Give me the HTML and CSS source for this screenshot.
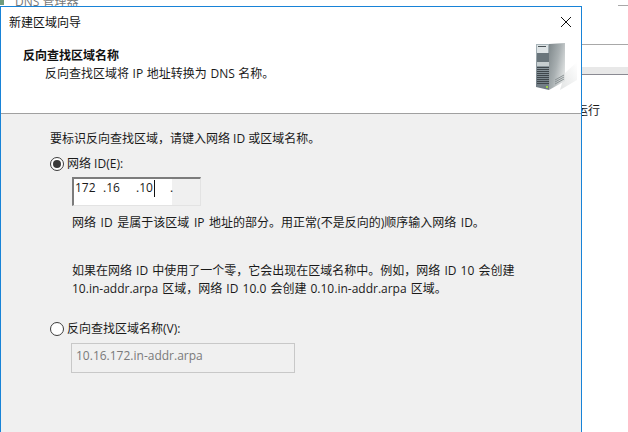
FILE: index.html
```html
<!DOCTYPE html>
<html lang="zh">
<head>
<meta charset="utf-8">
<title>新建区域向导</title>
<link rel="stylesheet" href="styles.css">
</head>
<body>
<div class="backdrop">
  <div class="bg-icon"></div>
  <div class="bg-title">DNS 管理器</div>
  <div class="bg-line bg-line-top"></div>
  <div class="bg-line bg-line-mid"></div>
  <div class="bg-band"></div>
  <div class="bg-text">运行</div>
</div>
<div class="dialog">
  <div class="titlebar">
    <span>新建区域向导</span>
    <svg class="close" width="12" height="12" viewBox="0 0 12 12"><path d="M1 1L11 11M11 1L1 11" stroke="#111" stroke-width="1" fill="none"/></svg>
  </div>
  <header class="head">
    <div class="head-text">
      <h1>反向查找区域名称</h1>
      <p>反向查找区域将 IP 地址转换为 DNS 名称。</p>
    </div>
    <svg class="server" width="41" height="48" viewBox="0 0 41 48">
      <defs>
        <linearGradient id="side" x1="0" y1="0" x2="1" y2="0.6"><stop offset="0" stop-color="#7f888b"/><stop offset=".55" stop-color="#a9b0b2"/><stop offset="1" stop-color="#dfe2e2"/></linearGradient>
        <linearGradient id="shadow" x1="0" y1="1" x2="1" y2="0"><stop offset="0" stop-color="#e2e4e4"/><stop offset="1" stop-color="#ffffff"/></linearGradient>
        <linearGradient id="front" x1="0" y1="0" x2="0" y2="1"><stop offset="0" stop-color="#a9b5ba"/><stop offset="1" stop-color="#6c7880"/></linearGradient>
      </defs>
      <polygon points="24,47 41,37 41,19 29,30" fill="url(#shadow)"/>
      <polygon points="0,1 13,1 13,47 0,44" fill="url(#front)"/>
      <polygon points="13,1 29,0 29,38 13,47" fill="url(#side)"/>
      <rect x="1" y="2" width="11" height="8" fill="#dde3e5"/>
      <rect x="2" y="3" width="8" height="1" fill="#4a5357"/>
      <rect x="1" y="10" width="12" height="9" fill="#69757b"/>
      <rect x="1" y="19" width="12" height="4" fill="#c6ced0"/>
      <path d="M1 24.500H13M1 26.500H13M1 28.500H13M1 30.500H13M1 32.500H13M1 34.500H13M1 36.500H13M1 38.500H13M1 40.500H13" stroke="#3f474c" stroke-width="1"/>
      <rect x="10" y="43" width="2" height="2" fill="#9bd14a"/>
      <path d="M19 37L28 32M19 39L28 34M19 41L28 36" stroke="#8a9294" stroke-width="1"/>
    </svg>
  </header>
  <main class="body">
    <p class="intro">要标识反向查找区域，请键入网络 ID 或区域名称。</p>
    <label class="radio-row">
      <span class="radio radio-on"></span>
      <span>网络 ID(E):</span>
    </label>
    <div class="ip-box">
      <span class="octet o1">172</span><span class="octet o2">.16</span><span class="octet o3">.10</span><span class="caret"></span><span class="octet o4">.</span>
    </div>
    <p class="note note-a">网络 ID 是属于该区域 IP 地址的部分。用正常(不是反向的)顺序输入网络 ID。</p>
    <p class="note note-b">如果在网络 ID 中使用了一个零，它会出现在区域名称中。例如，网络 ID 10 会创建<br>10.in-addr.arpa 区域，网络 ID 10.0 会创建 0.10.in-addr.arpa 区域。</p>
    <label class="radio-row radio-row-b">
      <span class="radio"></span>
      <span>反向查找区域名称(V):</span>
    </label>
    <div class="zone-box">10.16.172.in-addr.arpa</div>
  </main>
</div>
</body>
</html>
```
FILE: styles.css
```css
* { box-sizing: border-box; }
html, body { margin: 0; height: 100%; }
body {
  width: 628px;
  height: 432px;
  overflow: hidden;
  position: relative;
  background: #fff;
  font: 12px/16px "Open Sans", "Noto Sans CJK SC", sans-serif;
  color: #1a1a1a;
}
p, h1 { margin: 0; }
.backdrop { position: absolute; inset: 0; }
.bg-icon { position: absolute; left: 0; top: 0; width: 4px; height: 5px; background: #6f9a7c; }
.bg-title { position: absolute; left: 15px; top: -6px; color: #777; font-size: 12px; line-height: 16px; }
.bg-line { position: absolute; background: #a8a8a8; height: 1px; }
.bg-line-top { left: 618px; right: 0; top: 5px; }
.bg-line-mid { left: 581px; right: 0; top: 44px; }
.bg-band { position: absolute; left: 581px; right: 0; top: 67px; height: 8px; background: #e8e8e8; border-bottom: 1px solid #8a8a92; }
.bg-text { position: absolute; left: 572px; top: 103px; width: 28px; text-align: right; }
.dialog {
  position: absolute;
  left: 0; top: 6px;
  width: 582px;
  height: 430px;
  display: flex;
  flex-direction: column;
  background: #f0f0f0;
  border: 1px solid #1883d7;
  border-bottom: 0;
}
.titlebar {
  height: 29px;
  padding: 8px 9px 0 8px;
  display: flex;
  justify-content: space-between;
  background: #fff;
  color: #111;
}
.close { margin-top: 1px; }
.head {
  height: 78px;
  padding: 12px 4px 0 22px;
  display: flex;
  justify-content: space-between;
  background: #fff;
  border-bottom: 1px solid #a0a0a0;
}
.head h1 { font-size: 12px; line-height: 16px; font-weight: 700; color: #111; }
.head p { margin: 2px 0 0 22px; word-spacing: 0.500px; }
.server { margin-top: -5px; flex: none; }
.body { padding: 17px 0 0 49px; }
.radio-row { display: flex; align-items: center; gap: 3px; margin-top: 9px; height: 16px; }
.radio {
  width: 14px; height: 14px;
  border: 1px solid #3c3c3c;
  border-radius: 50%;
  background: #fff;
  display: inline-block;
  position: relative;
}
.radio-on::after {
  content: "";
  position: absolute;
  left: 2px; top: 2px;
  width: 8px; height: 8px;
  border-radius: 50%;
  background: #3a3a3a;
}
.ip-box {
  width: 129px; height: 29px;
  margin: 5px 0 0 22px;
  border: 1px solid #e3e3e3;
  border-top: 2px solid #7c7c7c;
  border-left: 2px solid #7c7c7c;
  background: linear-gradient(to right, #fff 98px, #f0f0f0 98px);
  position: relative;
}
.octet { position: absolute; top: 1px; }
.o1 { left: 1px; }
.o2 { left: 29px; }
.o3 { left: 62px; }
.o4 { left: 96px; }
.caret { position: absolute; left: 80px; top: 1px; width: 1px; height: 17px; background: #111; }
.note { margin-left: 22px; word-spacing: 1.500px; }
.note-a { margin-top: 9px; }
.note-b { margin-top: 31px; line-height: 18px; word-spacing: 1px; }
.radio-row-b { margin-top: 23px; }
.zone-box {
  width: 224px; height: 30px;
  margin: 6px 0 0 21px;
  padding: 4px 4px;
  border: 1px solid #c8c8c8;
  color: #7a7a7a;
}
```
